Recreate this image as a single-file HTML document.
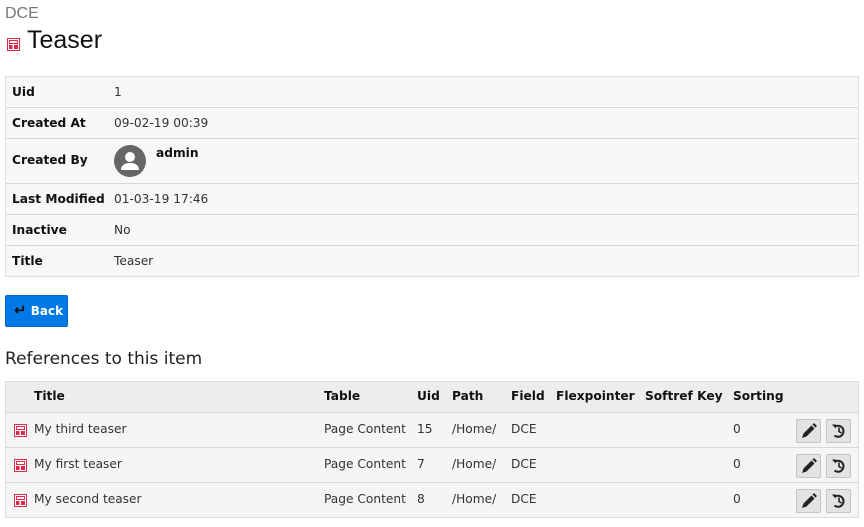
<!DOCTYPE html>
<html><head><meta charset="utf-8"><style>
*{margin:0;padding:0;box-sizing:border-box}
body{width:864px;height:527px;background:#fff;font-family:"DejaVu Sans","Liberation Sans",sans-serif;font-size:12.2px;color:#333;position:relative;overflow:hidden}
.a{position:absolute;white-space:nowrap}
.dce{left:5px;top:5px;font-family:"Liberation Sans",sans-serif;font-size:16px;color:#777}
.h1{left:27px;top:26px;font-family:"Liberation Sans",sans-serif;font-size:25px;color:#111}
.t1{left:5px;top:76px;width:854px;border:1px solid #ddd;background:#f7f7f7}
.r{position:relative;border-top:1px solid #d7d7d7;height:31px}
.r:first-child{border-top:none;height:30px}
.r b{position:absolute;left:6px;font-weight:bold;color:#111}
.r span{position:absolute;left:108px}
.btn{left:5px;top:295px;width:63px;height:32px;background:#0078e6;border:1px solid #0068c8;border-radius:2px;color:#fff;font-weight:bold;font-size:12px;padding:5px 0 0 8px}
.h2{left:5px;top:349px;font-family:"DejaVu Sans",sans-serif;font-size:17px;color:#222}
.t2{left:5px;top:381px;width:854px;border:1px solid #ddd}
.hd{height:30px;background:#ededed;position:relative;font-weight:bold;color:#111}
.row{height:35px;border-top:1px solid #d7d7d7;background:#f5f5f5;position:relative}
.hd span,.row span{position:absolute;top:7px}
.row span{top:9px}
.ib{position:absolute;top:6px;width:25px;height:24px;background:#e3e3e3;border:1px solid #c3c3c3;border-radius:2px}
</style></head><body>
<div class="a dce">DCE</div>
<svg class="a" style="left:7px;top:38px" width="13" height="13" viewBox="0 0 13 13"><rect x="0.5" y="0.5" width="12" height="12" fill="#fff" stroke="#e0284a"/><rect x="2.5" y="2.5" width="8" height="3" fill="none" stroke="#e0284a"/><rect x="2" y="7" width="3.5" height="4" fill="#e0284a"/><rect x="7" y="7" width="4" height="4" fill="#e0284a"/></svg>
<div class="a h1">Teaser</div>

<div class="a t1">
<div class="r" style="line-height:30px"><b>Uid</b><span>1</span></div>
<div class="r" style="line-height:30px"><b>Created At</b><span>09-02-19 00:39</span></div>
<div class="r" style="height:45px"><b style="top:14px">Created By</b>
<svg style="position:absolute;left:108px;top:6px" width="32" height="32" viewBox="0 0 32 32"><circle cx="16" cy="16" r="16" fill="#666"/><circle cx="16" cy="12" r="5" fill="#fff"/><path d="M7 25c0-5 4-7 9-7s9 2 9 7z" fill="#fff"/></svg>
<b style="left:150px;top:7px">admin</b></div>
<div class="r" style="line-height:30px"><b>Last Modified</b><span>01-03-19 17:46</span></div>
<div class="r" style="line-height:30px"><b>Inactive</b><span>No</span></div>
<div class="r" style="line-height:30px"><b>Title</b><span>Teaser</span></div>
</div>

<div class="a btn"><span style="font-size:15px;color:#111">↵</span> Back</div>
<div class="a h2">References to this item</div>

<div class="a t2">
<div class="hd"><span style="left:28px">Title</span><span style="left:318px">Table</span><span style="left:411px">Uid</span><span style="left:446px">Path</span><span style="left:505px">Field</span><span style="left:550px">Flexpointer</span><span style="left:639px">Softref Key</span><span style="left:727px">Sorting</span></div>
<div class="row"><svg style="position:absolute;left:8px;top:11px" width="13" height="13" viewBox="0 0 13 13"><rect x="0.5" y="0.5" width="12" height="12" fill="#fff" stroke="#e0284a"/><rect x="2.5" y="2.5" width="8" height="3" fill="none" stroke="#e0284a"/><rect x="2" y="7" width="3.5" height="4" fill="#e0284a"/><rect x="7" y="7" width="4" height="4" fill="#e0284a"/></svg><span style="left:28px">My third teaser</span><span style="left:318px">Page Content</span><span style="left:411px">15</span><span style="left:446px">/Home/</span><span style="left:505px">DCE</span><span style="left:727px">0</span>
<div class="ib" style="left:790px"><svg width="23" height="22" viewBox="0 0 23 22"><path d="M5 18l1.5-4.5 8-8 3 3-8 8z" fill="#222"/><path d="M15.5 4.5l1.5-1.5 3 3-1.5 1.5z" fill="#222"/></svg></div><div class="ib" style="left:820px"><svg width="23" height="22" viewBox="0 0 23 22"><path d="M7.5 7a5.5 5.5 0 1 1 0 8.5" fill="none" stroke="#222" stroke-width="2"/><path d="M5 4.5l4 0 -0.5 4z" fill="#222"/><path d="M12 7.5v4l2.5 1.5" fill="none" stroke="#222" stroke-width="1.6"/></svg></div></div>
<div class="row"><svg style="position:absolute;left:8px;top:11px" width="13" height="13" viewBox="0 0 13 13"><rect x="0.5" y="0.5" width="12" height="12" fill="#fff" stroke="#e0284a"/><rect x="2.5" y="2.5" width="8" height="3" fill="none" stroke="#e0284a"/><rect x="2" y="7" width="3.5" height="4" fill="#e0284a"/><rect x="7" y="7" width="4" height="4" fill="#e0284a"/></svg><span style="left:28px">My first teaser</span><span style="left:318px">Page Content</span><span style="left:411px">7</span><span style="left:446px">/Home/</span><span style="left:505px">DCE</span><span style="left:727px">0</span>
<div class="ib" style="left:790px"><svg width="23" height="22" viewBox="0 0 23 22"><path d="M5 18l1.5-4.5 8-8 3 3-8 8z" fill="#222"/><path d="M15.5 4.5l1.5-1.5 3 3-1.5 1.5z" fill="#222"/></svg></div><div class="ib" style="left:820px"><svg width="23" height="22" viewBox="0 0 23 22"><path d="M7.5 7a5.5 5.5 0 1 1 0 8.5" fill="none" stroke="#222" stroke-width="2"/><path d="M5 4.5l4 0 -0.5 4z" fill="#222"/><path d="M12 7.5v4l2.5 1.5" fill="none" stroke="#222" stroke-width="1.6"/></svg></div></div>
<div class="row"><svg style="position:absolute;left:8px;top:11px" width="13" height="13" viewBox="0 0 13 13"><rect x="0.5" y="0.5" width="12" height="12" fill="#fff" stroke="#e0284a"/><rect x="2.5" y="2.5" width="8" height="3" fill="none" stroke="#e0284a"/><rect x="2" y="7" width="3.5" height="4" fill="#e0284a"/><rect x="7" y="7" width="4" height="4" fill="#e0284a"/></svg><span style="left:28px">My second teaser</span><span style="left:318px">Page Content</span><span style="left:411px">8</span><span style="left:446px">/Home/</span><span style="left:505px">DCE</span><span style="left:727px">0</span>
<div class="ib" style="left:790px"><svg width="23" height="22" viewBox="0 0 23 22"><path d="M5 18l1.5-4.5 8-8 3 3-8 8z" fill="#222"/><path d="M15.5 4.5l1.5-1.5 3 3-1.5 1.5z" fill="#222"/></svg></div><div class="ib" style="left:820px"><svg width="23" height="22" viewBox="0 0 23 22"><path d="M7.5 7a5.5 5.5 0 1 1 0 8.5" fill="none" stroke="#222" stroke-width="2"/><path d="M5 4.5l4 0 -0.5 4z" fill="#222"/><path d="M12 7.5v4l2.5 1.5" fill="none" stroke="#222" stroke-width="1.6"/></svg></div></div>
</div>
</body></html>
